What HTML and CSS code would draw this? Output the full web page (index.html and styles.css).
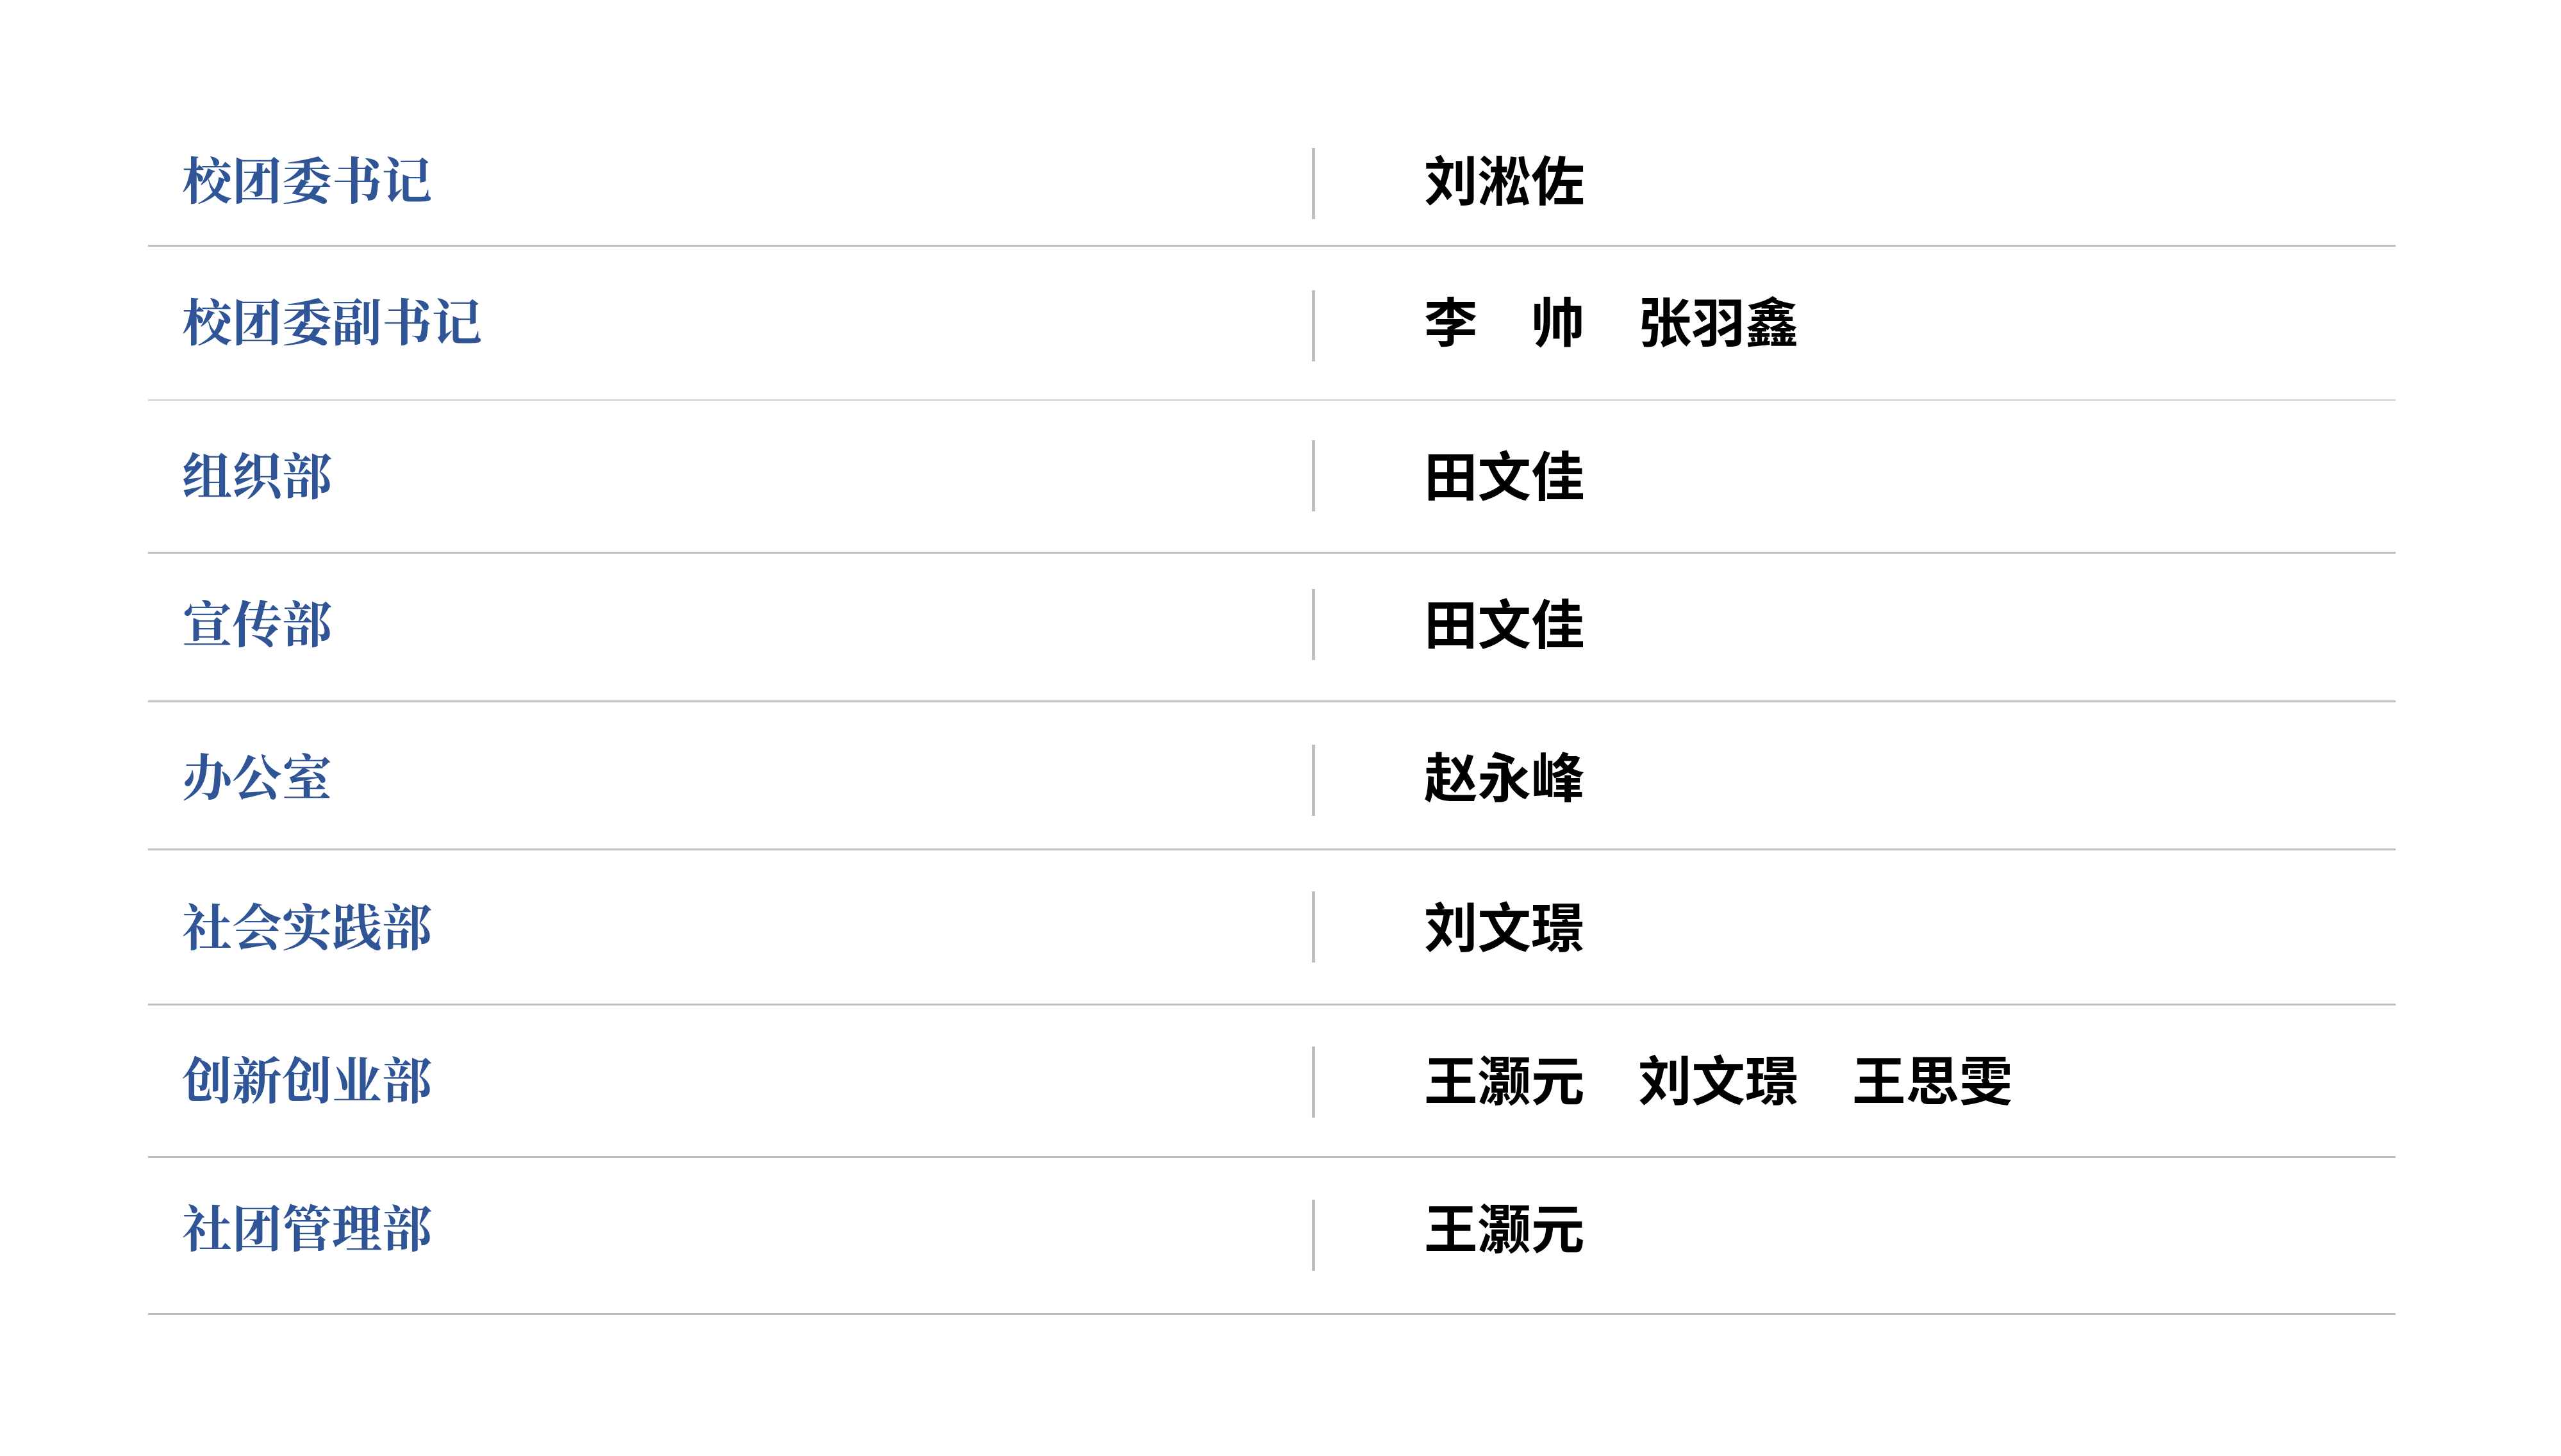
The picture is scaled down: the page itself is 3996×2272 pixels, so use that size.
FILE: index.html
```html
<!DOCTYPE html>
<html lang="zh-CN">
<head>
<meta charset="utf-8">
<title>校团委</title>
<link rel="stylesheet" href="styles.css">
</head>
<body>
<div class="board">
  <div class="row"><div class="label">校团委书记</div><div class="sep"></div><div class="names">刘淞佐</div></div>
  <div class="row"><div class="label">校团委副书记</div><div class="sep"></div><div class="names">李　帅　张羽鑫</div></div>
  <div class="row"><div class="label">组织部</div><div class="sep"></div><div class="names">田文佳</div></div>
  <div class="row"><div class="label">宣传部</div><div class="sep"></div><div class="names">田文佳</div></div>
  <div class="row"><div class="label">办公室</div><div class="sep"></div><div class="names">赵永峰</div></div>
  <div class="row"><div class="label">社会实践部</div><div class="sep"></div><div class="names">刘文璟</div></div>
  <div class="row"><div class="label">创新创业部</div><div class="sep"></div><div class="names">王灏元　刘文璟　王思雯</div></div>
  <div class="row"><div class="label">社团管理部</div><div class="sep"></div><div class="names">王灏元</div></div>
</div>
</body>
</html>
```

FILE: styles.css
```css
html, body {
  margin: 0;
  padding: 0;
  background: #ffffff;
}

.board {
  margin-left: 231px;
  width: 3507px;
}

.row {
  display: flex;
  align-items: flex-start;
  border-bottom: 3px solid #bfbfbf;
  padding-top: var(--pt);
  padding-bottom: var(--pb);
}

.row:nth-child(1) { --pt: 231px; --pb: 40px; --dy: -4px; }
.row:nth-child(2) { --pt: 68px;  --pb: 59px; --dy: -5px; border-bottom-color: #d9d9d9; }
.row:nth-child(3) { --pt: 61px;  --pb: 63px; --dy: 1px; }
.row:nth-child(4) { --pt: 55px;  --pb: 63px; --dy: 0px; }
.row:nth-child(5) { --pt: 66px;  --pb: 51px; --dy: -4px; }
.row:nth-child(6) { --pt: 64px;  --pb: 64px; --dy: 1px; }
.row:nth-child(7) { --pt: 64px;  --pb: 60px; --dy: -2px; }
.row:nth-child(8) { --pt: 65px;  --pb: 66px; --dy: -10px; }

.label {
  flex: none;
  width: 1816px;
  box-sizing: border-box;
  padding-left: 53px;
  margin-top: var(--dy);
  font-family: "Noto Serif CJK SC", "Noto Sans CJK SC", serif;
  font-weight: 700;
  font-size: 78px;
  line-height: 100px;
  color: #2f5597;
  white-space: nowrap;
}

.sep {
  flex: none;
  width: 5px;
  height: 111px;
  background: #bfbfbf;
}

.names {
  padding-left: 170px;
  margin-top: var(--dy);
  font-family: "Noto Sans CJK SC", sans-serif;
  font-weight: 700;
  font-size: 83.5px;
  line-height: 100px;
  color: #000000;
  white-space: pre;
}
```
